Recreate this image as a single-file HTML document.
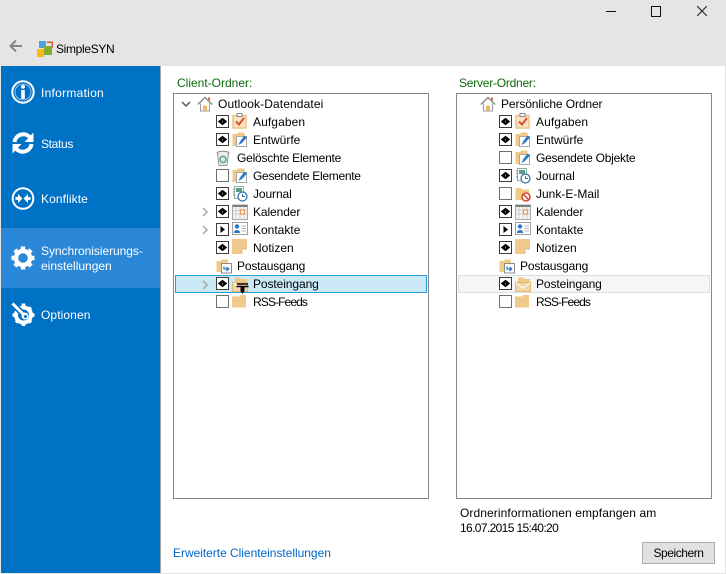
<!DOCTYPE html>
<html><head><meta charset="utf-8">
<style>
html,body{margin:0;padding:0;width:726px;height:574px;overflow:hidden;background:#fff;font-family:"Liberation Sans",sans-serif;font-size:12px;color:#000}
.a{position:absolute;white-space:nowrap}
.t{position:absolute;white-space:nowrap;line-height:16px;height:16px}
.nav{color:#fff;position:absolute;left:41px;line-height:16px;white-space:nowrap}
.cb{position:absolute;width:11px;height:11px;border:1px solid #3c3c3c;background:#fff}
.cb.e{border-color:#707070}
svg.i{position:absolute;width:16px;height:16px;overflow:visible}
</style></head><body>
<svg width="0" height="0" style="position:absolute">
<defs>
<symbol id="eye" viewBox="0 0 11 11"><path d="M0.800 5.500 5.500 1.800 10.200 5.500 5.500 9.200Z" fill="#000"/><path d="M5.500 4.500V6.500" stroke="#fff" stroke-width=".5"/></symbol>
<symbol id="home" viewBox="0 0 16 16"><path d="M0.800 8.500 8 1.500 15.200 8.500" fill="none" stroke="#8a8a8a" stroke-width="1.400"/><path d="M3.500 7.500V15H12.500V7.500" fill="#fff" stroke="#9a9a9a"/><rect x="6" y="9.500" width="4" height="5.500" fill="#e9b96e"/><rect x="11" y="1.500" width="2" height="3" fill="#d9694a"/></symbol>
<symbol id="task" viewBox="0 0 16 16"><rect x="1" y="2.500" width="13" height="12.500" fill="#f8e4c3" stroke="#ecc082" stroke-width="1.400"/><rect x="5" y="0.500" width="5" height="3" fill="#fff" stroke="#888"/><path d="M4 8.500 7 11.500 12 5" fill="none" stroke="#d9502e" stroke-width="2"/></symbol>
<symbol id="draft" viewBox="0 0 16 16"><path d="M0.500 3H5L6 1.500H12.500V6H9V15H0.500Z" fill="#efc987"/><rect x="4.500" y="5.500" width="10" height="10" fill="#fff" stroke="#a8a8a8"/><path d="M6.500 14 8 10.500 12.500 4.500 15 6.500 10 12Z" fill="#2f78c4"/></symbol>
<symbol id="trash" viewBox="0 0 16 16"><ellipse cx="8" cy="3" rx="6" ry="1.800" fill="#eee" stroke="#888"/><path d="M2.500 4 4 15.500H12L13.500 4" fill="#e9e9e9" stroke="#999"/><circle cx="8" cy="9.500" r="3" fill="none" stroke="#6db393" stroke-width="1.900"/></symbol>
<symbol id="journal" viewBox="0 0 16 16"><rect x="2.500" y="0.500" width="9" height="12" fill="#fff" stroke="#7fb79c"/><rect x="4" y="2" width="6" height="4" fill="#5f9c82"/><path d="M1 3H3M1 6H3M1 9H3" stroke="#888"/><circle cx="10.500" cy="10.500" r="4.500" fill="#fff" stroke="#2f6ea8" stroke-width="1.200"/><path d="M10.500 8V10.500H13" fill="none" stroke="#2f6ea8"/></symbol>
<symbol id="cal" viewBox="0 0 16 16"><rect x="0.500" y="1" width="15" height="14.500" fill="#f4f4f4" stroke="#a6a6a6"/><rect x="0.500" y="1" width="15" height="2" fill="#7d7d7d"/><path d="M4 3V15.500M8 3V15.500M12 3V15.500M0.500 6.500H15.500M0.500 10H15.500" stroke="#cfcfcf"/><rect x="8.500" y="6" width="4" height="4" fill="#fff" stroke="#e69a55" stroke-width="1.200"/></symbol>
<symbol id="contact" viewBox="0 0 16 16"><rect x="0.500" y="1.500" width="15" height="12" fill="#fff" stroke="#a0a0a0"/><circle cx="5" cy="5.500" r="2.200" fill="#2f78c4"/><path d="M1.800 12C1.800 8 8.200 8 8.200 12Z" fill="#2f78c4"/><path d="M9.500 5H14M9.500 7.500H14M9.500 10H14" stroke="#b5b5b5"/></symbol>
<symbol id="note" viewBox="0 0 16 16"><path d="M0 0H15V10L10 15H0Z" fill="#efca8c"/><path d="M10 15V10H15Z" fill="#fff"/><path d="M10 15V10H15" fill="none" stroke="#c9a264" stroke-width=".6"/></symbol>
<symbol id="out" viewBox="0 0 16 16"><path d="M0.500 3H5L6 1.500H12V5H9V14H0.500Z" fill="#efc987"/><rect x="5.500" y="5.500" width="10" height="9.500" fill="#fff" stroke="#8a8a8a"/><path d="M8 8.500V11H12.500M10.500 9 12.700 11 10.500 13" fill="none" stroke="#2f78c4" stroke-width="1.300"/></symbol>
<symbol id="folder" viewBox="0 0 16 16"><path d="M0 2.500H7L8 1H14V13.500H0Z" fill="#efca8c"/></symbol>
<symbol id="junk" viewBox="0 0 16 16"><path d="M0.500 2H6L7 3.500H14V14H0.500Z" fill="#efc987"/><circle cx="11" cy="11" r="4" fill="#fff" stroke="#d64a2e" stroke-width="1.600"/><path d="M8.300 8.300 13.700 13.700" stroke="#d64a2e" stroke-width="1.600"/></symbol>
<symbol id="inbox" viewBox="0 0 16 16"><path d="M3 1.500H8L9 3H15V8H3Z" fill="#efc987"/><path d="M0.500 6.500H15.500V15.500H0.500Z" fill="#f3d6a6" stroke="#e4b873"/><path d="M1 7 8 12 15 7" fill="none" stroke="#fff"/></symbol>
<symbol id="chevd" viewBox="0 0 10 10"><path d="M1 3 5 7 9 3" fill="none" stroke="#555" stroke-width="1.500"/></symbol>
<symbol id="chevr" viewBox="0 0 10 10"><path d="M3 1 7 5 3 9" fill="none" stroke="#a6a6a6" stroke-width="1.500"/></symbol>
</defs>
</svg>

<!-- title bar -->
<div class="a" style="left:0;top:0;width:726px;height:66px;background:#e5e5e5"></div>
<svg class="a" style="left:606px;top:11px" width="11" height="1"><rect width="10" height="1" fill="#111"/></svg>
<div class="a" style="left:651px;top:6px;width:8px;height:9px;border:1px solid #111"></div>
<svg class="a" style="left:697px;top:6px" width="10" height="10"><path d="M0 0 10 10M10 0 0 10" stroke="#222" stroke-width="1.100"/></svg>
<svg class="a" style="left:9px;top:39px" width="14" height="14"><path d="M1.500 7H13M7 1.500 1.500 7 7 12.500" fill="none" stroke="#858585" stroke-width="2"/></svg>
<svg class="a" style="left:37px;top:41px" width="17" height="16"><rect x="2" y="0" width="7" height="7" fill="#4aa3df"/><rect x="10" y="0.500" width="6" height="1.500" fill="#e5582b"/><rect x="14.500" y="0.500" width="1.500" height="6" fill="#e5582b"/><rect x="7" y="5" width="8" height="9" fill="#7fae2a"/><rect x="0" y="8" width="7" height="8" fill="#fdb813"/></svg>
<div class="t" style="left:56px;top:41px;letter-spacing:-.33px">SimpleSYN</div>

<!-- sidebar -->
<div class="a" style="left:1px;top:66px;width:159px;height:507px;background:#0072c6"></div>
<div class="a" style="left:160px;top:66px;width:1px;height:507px;background:#a5a5a5"></div>
<div class="a" style="left:1px;top:228px;width:159px;height:60px;background:#2b88d8"></div>

<svg class="a" style="left:11px;top:80px" width="24" height="24"><circle cx="12" cy="12" r="10.700" fill="none" stroke="#fff" stroke-width="2"/><circle cx="12" cy="12" r="8" fill="none" stroke="#fff" stroke-width=".8" opacity=".7"/><rect x="10.200" y="10" width="3.600" height="9" fill="#fff"/><circle cx="12" cy="6.700" r="2" fill="#fff"/></svg>
<div class="nav" style="top:85px;letter-spacing:.27px">Information</div>

<svg class="a" style="left:11px;top:131px" width="24" height="24"><path d="M3.500 11A8.800 8.800 0 0 1 19 6.500" fill="none" stroke="#fff" stroke-width="4"/><path d="M22.500 1.500V11H13.500Z" fill="#fff"/><path d="M20.500 13A8.800 8.800 0 0 1 5 17.500" fill="none" stroke="#fff" stroke-width="4"/><path d="M1.500 22.500V13H10.500Z" fill="#fff"/></svg>
<div class="nav" style="top:136px;letter-spacing:-.33px">Status</div>

<svg class="a" style="left:11px;top:187px" width="24" height="23"><circle cx="12" cy="11.500" r="10.300" fill="none" stroke="#fff" stroke-width="2"/><path d="M4.500 10H7V7L11.400 11.500 7 16V13H4.500ZM19.500 10H17V7L12.600 11.500 17 16V13H19.500Z" fill="#fff"/></svg>
<div class="nav" style="top:191px;letter-spacing:.1px">Konflikte</div>

<svg class="a" style="left:11px;top:246px" width="24" height="24"><circle cx="12" cy="12" r="7" fill="none" stroke="#fff" stroke-width="4.400"/><g stroke="#fff" stroke-width="4.400"><path d="M12 0.500V5M12 19V23.500M0.500 12H5M19 12H23.500M3.900 3.900 7 7M17 17 20.100 20.100M20.100 3.900 17 7M7 17 3.900 20.100"/></g></svg>
<div class="nav" style="top:243px;letter-spacing:-.05px">Synchronisierungs-</div>
<div class="nav" style="top:258px">einstellungen</div>

<svg class="a" style="left:11px;top:302px" width="24" height="24"><circle cx="12.500" cy="13" r="7.500" fill="none" stroke="#fff" stroke-width="4"/><g stroke="#fff" stroke-width="3.600"><path d="M12.500 1.500V5M12.500 21V24M23.500 13H20.500M5 13H1.500M20 5.500 17.800 7.700M7.500 18 5 20.500M20 20.500 17.800 18.300"/></g><path d="M1.500 1.500 11.500 11.500" stroke="#0072c6" stroke-width="6"/><path d="M1.500 1.500 12.500 12.500" stroke="#fff" stroke-width="3"/><circle cx="14" cy="14" r="3.500" fill="#fff"/><circle cx="14.500" cy="14.500" r="1.500" fill="#0072c6"/></svg>
<div class="nav" style="top:307px;letter-spacing:.1px">Optionen</div>

<!-- labels -->
<div class="t" style="left:177px;top:75px;color:#0b6a0b">Client-Ordner:</div>
<div class="t" style="left:459px;top:75px;color:#0b6a0b;letter-spacing:-.23px">Server-Ordner:</div>

<!-- tree boxes -->
<div class="a" style="left:173px;top:93px;width:254px;height:404px;border:1px solid #828790"></div>
<div class="a" style="left:456px;top:93px;width:254px;height:404px;border:1px solid #828790"></div>

<!-- selection -->
<div class="a" style="left:175px;top:275px;width:250px;height:16px;background:#cbe8f6;border:1px solid #26a0da"></div>
<div class="a" style="left:458px;top:275px;width:250px;height:16px;background:#f6f6f6;border:1px solid #dedede"></div>

<!-- LEFT TREE -->
<svg class="a" style="left:181px;top:99px" width="10" height="10"><use href="#chevd"/></svg>
<svg class="i" style="left:197px;top:96px"><use href="#home"/></svg>
<div class="t" style="left:218px;top:96px;letter-spacing:.11px">Outlook-Datendatei</div>

<div class="cb" style="left:216px;top:115px"><svg width="11" height="11"><use href="#eye"/></svg></div>
<svg class="i" style="left:232px;top:113px"><use href="#task"/></svg>
<div class="t" style="left:253px;top:114px;letter-spacing:.1px">Aufgaben</div>

<div class="cb" style="left:216px;top:133px"><svg width="11" height="11"><use href="#eye"/></svg></div>
<svg class="i" style="left:232px;top:131px"><use href="#draft"/></svg>
<div class="t" style="left:253px;top:132px">Entwürfe</div>

<svg class="i" style="left:215px;top:150px"><use href="#trash"/></svg>
<div class="t" style="left:237px;top:150px;letter-spacing:-.22px">Gelöschte Elemente</div>

<div class="cb e" style="left:216px;top:169px"></div>
<svg class="i" style="left:232px;top:167px"><use href="#draft"/></svg>
<div class="t" style="left:253px;top:168px;letter-spacing:-.28px">Gesendete Elemente</div>

<div class="cb" style="left:216px;top:187px"><svg width="11" height="11"><use href="#eye"/></svg></div>
<svg class="i" style="left:232px;top:186px"><use href="#journal"/></svg>
<div class="t" style="left:253px;top:186px;letter-spacing:-.1px">Journal</div>

<svg class="a" style="left:200px;top:207px" width="10" height="10"><use href="#chevr"/></svg>
<div class="cb" style="left:216px;top:205px"><svg width="11" height="11"><use href="#eye"/></svg></div>
<svg class="i" style="left:232px;top:204px"><use href="#cal"/></svg>
<div class="t" style="left:253px;top:204px;letter-spacing:-.1px">Kalender</div>

<svg class="a" style="left:200px;top:225px" width="10" height="10"><use href="#chevr"/></svg>
<div class="cb" style="left:216px;top:223px"><svg width="11" height="11"><path d="M3.500 2 8 5.500 3.500 9Z" fill="#000"/></svg></div>
<svg class="i" style="left:232px;top:221px"><use href="#contact"/></svg>
<div class="t" style="left:253px;top:222px">Kontakte</div>

<div class="cb" style="left:216px;top:241px"><svg width="11" height="11"><use href="#eye"/></svg></div>
<svg class="i" style="left:232px;top:239px"><use href="#note"/></svg>
<div class="t" style="left:253px;top:240px">Notizen</div>

<svg class="i" style="left:216px;top:258px"><use href="#out"/></svg>
<div class="t" style="left:237px;top:258px;letter-spacing:-.18px">Postausgang</div>

<svg class="a" style="left:200px;top:280px" width="10" height="10"><use href="#chevr"/></svg>
<div class="cb" style="left:216px;top:277px"><svg width="11" height="11"><use href="#eye"/></svg></div>
<svg class="i" style="left:232px;top:276px"><use href="#inbox"/></svg>
<svg class="a" style="left:236px;top:283px" width="13" height="11"><path d="M1 1H12M0.500 3.500H12.500" stroke="#000" stroke-width="1.500"/><path d="M4.500 4H8.500V8L6.500 11 4.500 8Z" fill="#000"/></svg>
<div class="t" style="left:253px;top:276px;letter-spacing:-.09px">Posteingang</div>

<div class="cb e" style="left:216px;top:295px"></div>
<svg class="i" style="left:232px;top:294px"><use href="#folder"/></svg>
<div class="t" style="left:253px;top:294px;letter-spacing:-.89px">RSS-Feeds</div>

<!-- RIGHT TREE -->
<svg class="i" style="left:480px;top:96px"><use href="#home"/></svg>
<div class="t" style="left:501px;top:96px;letter-spacing:-.11px">Persönliche Ordner</div>

<div class="cb" style="left:499px;top:115px"><svg width="11" height="11"><use href="#eye"/></svg></div>
<svg class="i" style="left:515px;top:113px"><use href="#task"/></svg>
<div class="t" style="left:536px;top:114px;letter-spacing:.1px">Aufgaben</div>

<div class="cb" style="left:499px;top:133px"><svg width="11" height="11"><use href="#eye"/></svg></div>
<svg class="i" style="left:515px;top:131px"><use href="#draft"/></svg>
<div class="t" style="left:536px;top:132px">Entwürfe</div>

<div class="cb e" style="left:499px;top:151px"></div>
<svg class="i" style="left:515px;top:149px"><use href="#draft"/></svg>
<div class="t" style="left:536px;top:150px;letter-spacing:-.24px">Gesendete Objekte</div>

<div class="cb" style="left:499px;top:169px"><svg width="11" height="11"><use href="#eye"/></svg></div>
<svg class="i" style="left:515px;top:168px"><use href="#journal"/></svg>
<div class="t" style="left:536px;top:168px;letter-spacing:-.1px">Journal</div>

<div class="cb e" style="left:499px;top:187px"></div>
<svg class="i" style="left:515px;top:186px"><use href="#junk"/></svg>
<div class="t" style="left:536px;top:186px">Junk-E-Mail</div>

<div class="cb" style="left:499px;top:205px"><svg width="11" height="11"><use href="#eye"/></svg></div>
<svg class="i" style="left:515px;top:204px"><use href="#cal"/></svg>
<div class="t" style="left:536px;top:204px;letter-spacing:-.1px">Kalender</div>

<div class="cb" style="left:499px;top:223px"><svg width="11" height="11"><path d="M3.500 2 8 5.500 3.500 9Z" fill="#000"/></svg></div>
<svg class="i" style="left:515px;top:221px"><use href="#contact"/></svg>
<div class="t" style="left:536px;top:222px">Kontakte</div>

<div class="cb" style="left:499px;top:241px"><svg width="11" height="11"><use href="#eye"/></svg></div>
<svg class="i" style="left:515px;top:239px"><use href="#note"/></svg>
<div class="t" style="left:536px;top:240px">Notizen</div>

<svg class="i" style="left:499px;top:258px"><use href="#out"/></svg>
<div class="t" style="left:520px;top:258px;letter-spacing:-.18px">Postausgang</div>

<div class="cb" style="left:499px;top:277px"><svg width="11" height="11"><use href="#eye"/></svg></div>
<svg class="i" style="left:515px;top:276px"><use href="#inbox"/></svg>
<div class="t" style="left:536px;top:276px;letter-spacing:-.09px">Posteingang</div>

<div class="cb e" style="left:499px;top:295px"></div>
<svg class="i" style="left:515px;top:294px"><use href="#folder"/></svg>
<div class="t" style="left:536px;top:294px;letter-spacing:-.89px">RSS-Feeds</div>

<!-- footer -->
<div class="t" style="left:460px;top:505px;letter-spacing:.09px">Ordnerinformationen empfangen am</div>
<div class="t" style="left:460px;top:520px;letter-spacing:-.63px">16.07.2015 15:40:20</div>
<div class="t" style="left:173px;top:545px;color:#0066cc;letter-spacing:-.03px">Erweiterte Clienteinstellungen</div>
<div class="a" style="left:642px;top:542px;width:71px;height:20px;background:#e1e1e1;border:1px solid #adadad;text-align:center;line-height:20px;letter-spacing:-.44px">Speichern</div>
<div class="a" style="left:0;top:573px;width:726px;height:1px;background:#e5e5e5"></div>
<div class="a" style="left:0;top:66px;width:1px;height:508px;background:#e5e5e5"></div>
<div class="a" style="left:725px;top:66px;width:1px;height:508px;background:#e5e5e5"></div>
</body></html>
